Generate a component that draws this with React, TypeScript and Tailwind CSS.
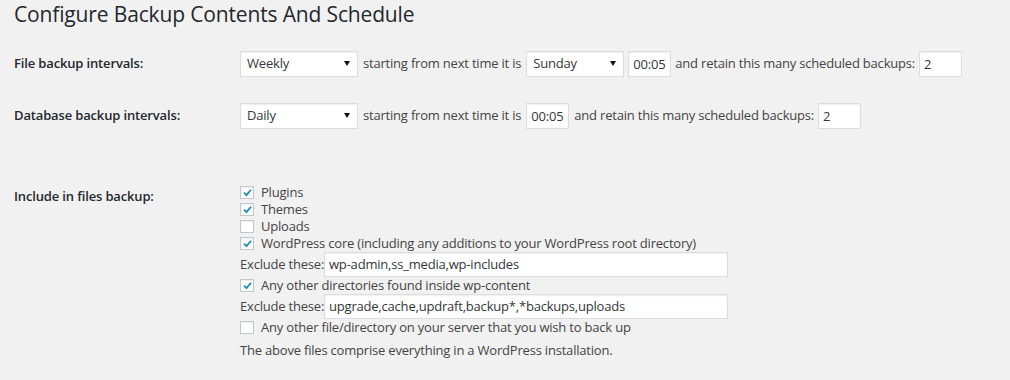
import React from "react";

const font = { fontFamily: '"Open Sans", "Noto Sans", sans-serif' };

function Select({ value, width }: { value: string; width: string }) {
  return (
    <div className={`relative h-[26px] shrink-0 ${width}`}>
      <select
        defaultValue={value}
        className="h-full w-full appearance-none border border-[#ddd] bg-white pl-[6px] text-[13px] tracking-[-0.2px] text-[#32373c] shadow-[inset_0_1px_2px_rgba(0,0,0,0.07)] outline-none"
      >
        <option>{value}</option>
      </select>
      <svg
        className="pointer-events-none absolute right-[8px] top-[10px] h-[5px] w-[6px]"
        viewBox="0 0 6 5"
      >
        <path d="M0 0 L6 0 L3 5 Z" fill="#111" />
      </svg>
    </div>
  );
}

function TextBox({
  value,
  width,
  height = "h-[26px]",
  className = "",
}: {
  value: string;
  width: string;
  height?: string;
  className?: string;
}) {
  return (
    <input
      readOnly
      value={value}
      className={`${height} ${width} ${className} shrink-0 border border-[#ddd] bg-white px-[4px] text-[13px] tracking-[-0.2px] text-[#32373c] shadow-[inset_0_1px_2px_rgba(0,0,0,0.07)] outline-none`}
    />
  );
}

function Check({ checked, label }: { checked: boolean; label: string }) {
  return (
    <label className="flex h-[17px] items-center gap-[7px]">
      <span className="flex h-[13px] w-[14px] shrink-0 items-center justify-center border border-[#c3c7cb] bg-white shadow-[inset_0_1px_2px_rgba(0,0,0,0.08)]">
        {checked && (
          <svg viewBox="0 0 12 12" className="h-[11px] w-[11px]">
            <path d="M2.2 6.2 L4.9 8.9 L9.8 3" fill="none" stroke="#1e8cbe" strokeWidth="2" />
          </svg>
        )}
      </span>
      <span className="whitespace-nowrap">{label}</span>
    </label>
  );
}

function Exclude({ value }: { value: string }) {
  return (
    <div className="flex h-[24px] items-center">
      <span className="w-[84px] shrink-0 whitespace-nowrap">Exclude these:</span>
      <TextBox value={value} width="w-[404px]" height="h-[25px]" />
    </div>
  );
}

export default function App() {
  return (
    <div
      style={font}
      className="min-h-[380px] w-[1010px] bg-[#f1f1f1] pl-[14px] text-[13px] tracking-[-0.2px] text-[#444]"
    >
      <h2 className="pt-[1px] text-[21px] font-normal leading-[27px] tracking-[-0.15px] text-[#23282d]">
        Configure Backup Contents And Schedule
      </h2>

      <div className="mt-[23px] flex h-[26px] items-center">
        <div className="w-[226px] shrink-0 text-[13px] font-semibold tracking-[-0.15px] text-[#23282d]">
          File backup intervals:
        </div>
        <div className="flex items-center gap-[5px]">
          <Select value="Weekly" width="w-[118px]" />
          <span>starting from next time it is</span>
          <Select value="Sunday" width="w-[98px]" />
          <TextBox value="00:05" width="w-[43px]" className="-ml-[1px]" />
          <span className="-ml-[1px]">and retain this many scheduled backups:</span>
          <TextBox value="2" width="w-[43px]" className="-ml-[1px]" />
        </div>
      </div>

      <div className="mt-[26px] flex h-[26px] items-center">
        <div className="w-[226px] shrink-0 text-[13px] font-semibold tracking-[-0.15px] text-[#23282d]">
          Database backup intervals:
        </div>
        <div className="flex items-center gap-[5px]">
          <Select value="Daily" width="w-[118px]" />
          <span>starting from next time it is</span>
          <TextBox value="00:05" width="w-[43px]" />
          <span>and retain this many scheduled backups:</span>
          <TextBox value="2" width="w-[43px]" className="-ml-[1px]" />
        </div>
      </div>

      <div className="mt-[55px] flex">
        <div className="w-[226px] shrink-0 pt-[4px] text-[13px] font-semibold leading-[17px] tracking-[-0.15px] text-[#23282d]">
          Include in files backup:
        </div>
        <div className="flex flex-col leading-[17px]">
          <Check checked label="Plugins" />
          <Check checked label="Themes" />
          <Check checked={false} label="Uploads" />
          <Check checked label="WordPress core (including any additions to your WordPress root directory)" />
          <Exclude value="wp-admin,ss_media,wp-includes" />
          <div className="mt-[1px]">
            <Check checked label="Any other directories found inside wp-content" />
          </div>
          <Exclude value="upgrade,cache,updraft,backup*,*backups,uploads" />
          <div className="mt-[1px]">
            <Check checked={false} label="Any other file/directory on your server that you wish to back up" />
          </div>
          <p className="mt-[6px]">The above files comprise everything in a WordPress installation.</p>
        </div>
      </div>
    </div>
  );
}
